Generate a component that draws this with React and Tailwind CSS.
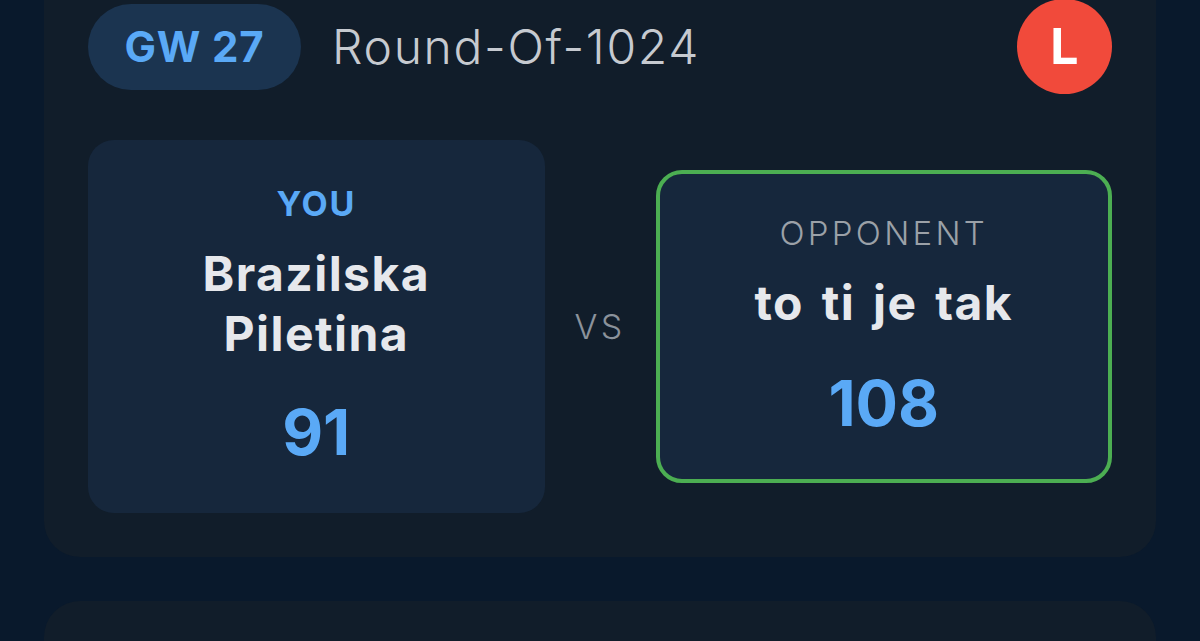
import React from 'react'

const font = { fontFamily: 'Inter, "Open Sans", sans-serif' }

const ScoreBox = ({ label, name, score, winner, nameClass = '' }) => (
  <div
    className={`flex flex-col items-center justify-center rounded-[26px] bg-[#16273c] text-center ${
      winner ? 'h-[313px] border-[4px] border-[#4cae52]' : 'h-[373px]'
    }`}
  >
    {label}
    <div className={`mt-[20px] text-[48px] font-bold leading-[60px] tracking-[0.03em] text-[#e6e8ec] ${nameClass}`}>
      {name}
    </div>
    <div className={`${winner ? 'mt-[32px]' : 'mt-[30px]'} text-[63px] font-bold leading-[76px] text-[#5aa9f6]`}>
      {score}
    </div>
  </div>
)

const App = () => {
  return (
    <div className="min-h-screen w-full overflow-hidden bg-[#09192c] px-[44px]" style={font}>
      <div className="-mt-[44px] rounded-[36px] bg-[#111d2a] px-[44px] pb-[44px] pt-[43px]">
        <div className="flex items-center justify-between">
          <div className="flex items-center gap-[31px]">
            <div className="flex h-[86px] w-[213px] items-center justify-center rounded-full bg-[#1b3450] text-[42px] font-bold tracking-[0.02em] text-[#5aa9f6]">
              GW 27
            </div>
            <div className="text-[48px] font-light tracking-[0.035em] text-[#c6cad0]">Round-Of-1024</div>
          </div>
          <div className="flex h-[95px] w-[95px] items-center justify-center rounded-full bg-[#f14a3b] text-[50px] font-bold text-white">
            L
          </div>
        </div>

        <div className="mt-[46px] grid grid-cols-[1fr_111px_1fr] items-center">
          <ScoreBox
            label={<div className="text-[34px] font-bold leading-[40px] tracking-[0.05em] text-[#5aa9f6]">YOU</div>}
            name={
              <>
                Brazilska
                <br />
                Piletina
              </>
            }
            score="91"
          />
          <div className="text-center text-[34px] font-light tracking-[0.1em] text-[#8b929b]">VS</div>
          <ScoreBox
            winner
            label={
              <div className="text-[33px] font-light leading-[40px] tracking-[0.1em] text-[#9ba1a8]">OPPONENT</div>
            }
            name="to ti je tak"
            nameClass="[word-spacing:5px]"
            score="108"
          />
        </div>
      </div>

      <div className="mt-[44px] h-[200px] rounded-[36px] bg-[#111d2a]" />
    </div>
  )
}

export default App
